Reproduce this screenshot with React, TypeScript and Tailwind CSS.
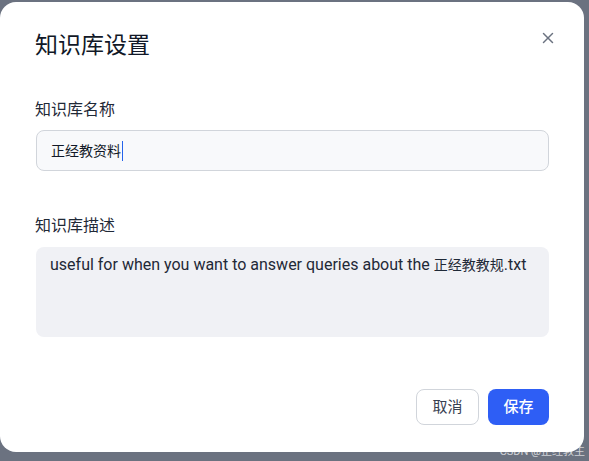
import { X } from 'lucide-react'

const font = { fontFamily: 'Roboto, "Noto Sans CJK SC", sans-serif' }

export default function App() {
  return (
    <div className="relative h-[461px] w-[589px] overflow-hidden bg-[#6b7280]" style={font}>
      {/* Dialog */}
      <div className="relative mt-[2px] h-[450px] w-[584px] rounded-2xl bg-white px-[35px] pt-[28px]">
        <h2 className="text-[23px] leading-8 text-[#111827]">知识库设置</h2>
        <button className="absolute right-[27px] top-[27px] text-[#6b7280]">
          <X className="h-[18px] w-[18px]" strokeWidth={2} />
        </button>

        <label className="mt-[36px] block text-base leading-6 text-[#1f2937]">知识库名称</label>
        <div className="mt-2 ml-px flex h-[41px] w-[513px] items-center rounded-lg border border-[#d1d5db] bg-[#f8f9fb] px-[14px] text-sm text-[#111827]">
          正经教资料<span className="ml-px h-[20px] w-px bg-[#2563eb]"></span>
        </div>

        <label className="mt-[43px] block text-base leading-6 text-[#1f2937]">知识库描述</label>
        <div className="mt-[9px] ml-px h-[90px] w-[513px] rounded-lg bg-[#f0f1f5] pl-[14px] pr-[6px] pt-[6px] text-base leading-6 text-[#1f2937]">
          useful for when you want to answer queries about the <span className="text-[14px]">正经教教规</span>.txt
        </div>

        <div className="mt-[52px] flex w-[514px] justify-end gap-[9px]">
          <button className="h-[36px] w-[63px] rounded-lg border border-[#d1d5db] bg-white text-[15px] text-[#374151]">
            取消
          </button>
          <button className="h-[36px] w-[61px] rounded-lg bg-[#2e5ef5] text-[15px] font-medium text-white">
            保存
          </button>
        </div>
      </div>

      {/* Watermark */}
      <div className="absolute bottom-[4px] right-[4px] text-[11px] leading-none text-white/70">
        CSDN @正经教主
      </div>
    </div>
  )
}
